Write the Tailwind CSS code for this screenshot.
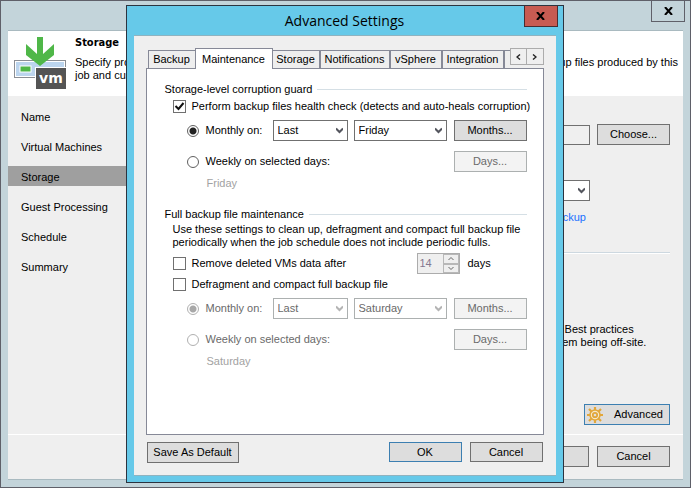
<!DOCTYPE html>
<html lang="en">
<head>
    <meta charset="UTF-8">
    <meta name="viewport" content="width=device-width, initial-scale=1.0">
    <title>Advanced Settings</title>
    <script src="https://cdn.jsdelivr.net/npm/@tailwindcss/browser@4"></script>
</head>
<body class="relative min-h-screen flex flex-col bg-[#c3d4da] border border-[#5f6069] font-['Liberation_Sans',Arial,sans-serif] text-[11px] leading-[13px] text-black">

    <!-- Job wizard window -->
    <header class="flex justify-end h-[29px] pr-[5px] shrink-0">
        <button aria-label="Close wizard" class="w-[34px] h-[21px] border border-t-0 border-[#5f6069] flex items-center justify-center">
            <svg class="w-[9px] h-[8px]" viewBox="0 0 9 8" fill="none" stroke="#000" stroke-width="2"><path d="M1 0l7 8M8 0L1 8"/></svg>
        </button>
    </header>

    <div class="flex-1 flex flex-col mx-[7px] mb-[7px] bg-[#efefef] border-y border-[#a9bac0]">
        <div class="flex h-[65px] bg-white shrink-0">
            <svg class="w-[52px] h-[52px] ml-[6px] mt-[6px] shrink-0" viewBox="0 0 52 52">
                <rect x="0.5" y="23.5" width="51" height="17" fill="#fff" stroke="#8b8e94"/>
                <rect x="2" y="25" width="48" height="14" fill="#bcd5ee"/>
                <rect x="6" y="29" width="11" height="6" fill="#4fb748" stroke="#fff"/>
                <path d="M23 0h6v17l11-10v11L26 29 12 18V7l11 10z" fill="#4fb748"/>
                <rect x="21" y="30" width="31" height="22" fill="#fff"/>
                <rect x="22" y="31" width="30" height="21" fill="#545454"/>
                <text x="25" y="46" font-family="DejaVu Sans" font-weight="bold" font-size="14" fill="#fff">vm</text>
            </svg>
            <div class="flex-1 pl-[9px] pr-[5px] pt-[5px]">
                <h1 class="font-['DejaVu_Sans_Condensed','DejaVu_Sans',sans-serif] font-bold text-[11px]">Storage</h1>
                <div class="flex justify-between pt-[7px] whitespace-nowrap">
                    <p>Specify prox<br>job and custo</p>
                    <p>backup files produced by this</p>
                </div>
            </div>
        </div>

        <div class="flex-1 flex">
            <nav class="w-[140px] pt-[10px] flex flex-col gap-[10px]">
                <a href="#" class="h-[20px] pt-[2px] px-[13px] flex items-center">Name</a>
                <a href="#" class="h-[20px] pt-[2px] px-[13px] flex items-center">Virtual Machines</a>
                <a href="#" class="h-[20px] pt-[2px] px-[13px] flex items-center bg-[#9f9f9f]">Storage</a>
                <a href="#" class="h-[20px] pt-[2px] px-[13px] flex items-center">Guest Processing</a>
                <a href="#" class="h-[20px] pt-[2px] px-[13px] flex items-center">Schedule</a>
                <a href="#" class="h-[20px] pt-[2px] px-[13px] flex items-center">Summary</a>
            </nav>
            <main class="flex-1 flex flex-col items-end pr-[13px] pt-[28px]">
                <div class="flex items-center gap-[7px]">
                    <input type="text" aria-label="Backup proxy" readonly class="w-[100px] h-[20px] border border-[#707070] bg-[#efefef]">
                    <button class="w-[73px] h-[21px] border border-[#707070] bg-[#dddddd]">Choose...</button>
                </div>
                <div class="relative mt-[35px] mr-[80px]">
                    <select aria-label="Backup repository" class="block w-[100px] h-[21px] appearance-none border border-[#707070] bg-white">
                        <option></option>
                    </select>
                    <svg class="absolute right-[5px] top-[7px] w-[7px] h-[7px] pointer-events-none" viewBox="0 0 7 7" fill="none" stroke="#54565e" stroke-width="2"><path d="M0 1.5l3.5 3.5L7 1.5"/></svg>
                </div>
                <a href="#" class="mt-[10px] mr-[84px] text-[#1a6fff]">Map backup</a>
                <hr class="w-full mt-[28px] border-t border-[#cdd8e0] border-b border-b-white">
                <div class="w-[117px] mt-[69px] whitespace-nowrap">
                    <p>it. Best practices</p>
                    <p>them being off-site.</p>
                </div>
                <button class="w-[86px] h-[21px] mt-[55px] pl-[2px] flex items-center gap-[11px] border border-[#3c7fb1] bg-[#dddddd]">
                    <svg class="w-[16px] h-[16px]" viewBox="0 0 16 16" fill="none" stroke="#e2a73a">
                        <path d="M8 0v3M8 13v3M0 8h3M13 8h3M2 2l2.5 2.5M11.5 11.5L14 14M14 2l-2.5 2.5M4.5 11.5L2 14" stroke-width="2.2"/>
                        <circle cx="8" cy="8" r="5" stroke-width="1.6" fill="#f7e9c8"/>
                        <circle cx="8" cy="8" r="2.2" stroke-width="1.8" fill="#dddddd"/>
                    </svg>
                    Advanced
                </button>
            </main>
        </div>

        <footer class="flex justify-end gap-[8px] h-[45px] pt-[11px] pr-[13px] border-t border-white shrink-0">
            <button class="w-[90px] h-[21px] border border-[#707070] bg-[#dddddd]">Finish</button>
            <button class="w-[73px] h-[21px] border border-[#707070] bg-[#dddddd]">Cancel</button>
        </footer>
    </div>

    <!-- Advanced settings dialog -->
    <div class="absolute inset-0 flex justify-center pt-[4px] pb-[4px] pr-[2px]">
        <div role="dialog" aria-labelledby="dialogTitle" class="w-[438px] flex flex-col border border-[#2b3440] bg-[#66c9e9]">
            <div class="relative h-[29px] flex items-center justify-center shrink-0">
                <h2 id="dialogTitle" class="font-['Open_Sans','Noto_Sans',sans-serif] text-[14px] leading-[20px]">Advanced Settings</h2>
                <button aria-label="Close" class="absolute right-[5px] top-0 w-[34px] h-[21px] border border-t-0 border-[#4a2c30] bg-[#c75b52] flex items-center justify-center">
                    <svg class="w-[9px] h-[8px]" viewBox="0 0 9 8" fill="none" stroke="#000" stroke-width="2"><path d="M1 0l7 8M8 0L1 8"/></svg>
                </button>
            </div>

            <div class="flex-1 flex flex-col mx-[7px] mb-[6px] px-[12px] pt-[12px] bg-[#efefef] border-y border-[#8fb3c0]">
                <div role="tablist" class="relative z-10 flex items-end -mb-px pl-[2px] whitespace-nowrap">
                    <button role="tab" class="h-[19px] w-[47px] border border-r-0 border-[#868997] bg-[#eeeeee]">Backup</button>
                    <button role="tab" aria-selected="true" class="h-[21px] w-[78px] border border-b-0 border-[#868997] bg-white">Maintenance</button>
                    <button role="tab" class="h-[19px] w-[47px] border border-l-0 border-[#868997] bg-[#eeeeee]">Storage</button>
                    <button role="tab" class="h-[19px] w-[70px] border border-[#868997] bg-[#eeeeee]">Notifications</button>
                    <button role="tab" class="h-[19px] w-[52px] border border-[#868997] bg-[#eeeeee]">vSphere</button>
                    <button role="tab" class="h-[19px] w-[62px] border border-[#868997] bg-[#eeeeee]">Integration</button>
                    <span class="h-[19px] w-[6px] border-l border-y border-[#868997] bg-[#eeeeee]"></span>
                    <div class="flex-1 flex self-start">
                        <button aria-label="Previous tabs" class="flex-1 h-[17px] border border-[#acacac] bg-[#efefef] flex items-center justify-center">
                            <svg class="w-[5px] h-[6px]" viewBox="0 0 5 6" fill="none" stroke="#222" stroke-width="1.4"><path d="M4 0.5L1 3l3 2.5"/></svg>
                        </button>
                        <button aria-label="Next tabs" class="flex-1 h-[17px] border border-l-0 border-[#acacac] bg-[#efefef] flex items-center justify-center">
                            <svg class="w-[5px] h-[6px]" viewBox="0 0 5 6" fill="none" stroke="#222" stroke-width="1.4"><path d="M1 0.5L4 3 1 5.5"/></svg>
                        </button>
                    </div>
                </div>

                <div role="tabpanel" class="flex-1 pl-[18px] pr-[16px] pt-[14px] border border-[#868997] bg-white whitespace-nowrap">
                    <section>
                        <h3 class="flex items-center gap-[5px]">Storage-level corruption guard<span class="flex-1 border-t border-[#d5dfe5]"></span></h3>
                        <div class="pl-[8px]">
                            <label class="flex items-center gap-[6px] h-[20px]">
                                <span class="relative">
                                    <input type="checkbox" checked class="block size-[13px] appearance-none border border-[#707070] bg-white">
                                    <svg class="absolute inset-0 size-[13px] pointer-events-none" viewBox="0 0 13 13" fill="none" stroke="#111" stroke-width="2"><path d="M2.5 6L5.5 9l5-6"/></svg>
                                </span>
                                Perform backup files health check (detects and auto-heals corruption)
                            </label>
                            <div class="flex items-center pl-[14px] mt-[4px]">
                                <label class="flex items-center gap-[7px] w-[86px]">
                                    <input type="radio" name="health" checked class="size-[12px] appearance-none rounded-full border border-[#606060] bg-[radial-gradient(circle,#222_3px,#fff_4px)]">
                                    Monthly on:
                                </label>
                                <div class="relative w-[75px]">
                                    <select aria-label="Week of month" class="block w-full h-[21px] pl-[4px] appearance-none border border-[#707070] bg-white"><option>Last</option></select>
                                    <svg class="absolute right-[5px] top-[7px] w-[7px] h-[7px] pointer-events-none" viewBox="0 0 7 7" fill="none" stroke="#54565e" stroke-width="2"><path d="M0 1.5l3.5 3.5L7 1.5"/></svg>
                                </div>
                                <div class="relative w-[93px] ml-[6px]">
                                    <select aria-label="Day of week" class="block w-full h-[21px] pl-[4px] appearance-none border border-[#707070] bg-white"><option>Friday</option></select>
                                    <svg class="absolute right-[5px] top-[7px] w-[7px] h-[7px] pointer-events-none" viewBox="0 0 7 7" fill="none" stroke="#54565e" stroke-width="2"><path d="M0 1.5l3.5 3.5L7 1.5"/></svg>
                                </div>
                                <button class="w-[73px] h-[21px] ml-auto border border-[#707070] bg-[#dddddd]">Months...</button>
                            </div>
                            <div class="flex items-center justify-between pl-[14px] mt-[10px]">
                                <label class="flex items-center gap-[7px]">
                                    <input type="radio" name="health" class="size-[12px] appearance-none rounded-full border border-[#606060] bg-white">
                                    Weekly on selected days:
                                </label>
                                <button disabled class="w-[73px] h-[21px] border border-[#acb0b0] bg-[#f3f3f3] text-[#6a6a6a]">Days...</button>
                            </div>
                            <p class="pl-[34px] mt-[5px] text-[#a2a2a2]">Friday</p>
                        </div>
                    </section>

                    <section class="mt-[18px]">
                        <h3 class="flex items-center gap-[5px]">Full backup file maintenance<span class="flex-1 border-t border-[#d5dfe5]"></span></h3>
                        <div class="pl-[8px]">
                            <p class="mt-[2px]">Use these settings to clean up, defragment and compact full backup file<br>periodically when the job schedule does not include periodic fulls.</p>
                            <div class="flex items-center mt-[4px]">
                                <label class="flex items-center gap-[6px] w-[244px]">
                                    <input type="checkbox" class="size-[13px] appearance-none border border-[#707070] bg-white">
                                    Remove deleted VMs data after
                                </label>
                                <div class="flex w-[43px] h-[21px] border border-[#acacac] bg-[#efefef]">
                                    <input type="text" id="retentionDays" value="14" disabled class="w-0 flex-1 pl-[2px] text-[#857890]">
                                    <div class="flex flex-col w-[16px]">
                                        <button disabled aria-label="Increase" class="flex-1 border border-[#b8b8b8] flex items-center justify-center">
                                            <svg class="w-[6px] h-[5px]" viewBox="0 0 6 5" fill="none" stroke="#666"><path d="M0.5 4L3 1.5 5.5 4"/></svg>
                                        </button>
                                        <button disabled aria-label="Decrease" class="flex-1 border border-[#b8b8b8] flex items-center justify-center">
                                            <svg class="w-[6px] h-[5px]" viewBox="0 0 6 5" fill="none" stroke="#666"><path d="M0.5 1L3 3.5 5.5 1"/></svg>
                                        </button>
                                    </div>
                                </div>
                                <label for="retentionDays" class="pl-[8px]">days</label>
                            </div>
                            <label class="flex items-center gap-[6px] h-[20px]">
                                <input type="checkbox" class="size-[13px] appearance-none border border-[#707070] bg-white">
                                Defragment and compact full backup file
                            </label>
                            <div class="flex items-center pl-[14px] mt-[4px] text-[#6a6a6a]">
                                <label class="flex items-center gap-[7px] w-[86px]">
                                    <input type="radio" name="defrag" checked disabled class="size-[12px] appearance-none rounded-full border border-[#b0b0b0] bg-[radial-gradient(circle,#a8a8a8_3px,#fff_4px)]">
                                    Monthly on:
                                </label>
                                <div class="relative w-[75px]">
                                    <select aria-label="Defragment week of month" disabled class="block w-full h-[21px] pl-[4px] appearance-none border border-[#acb0b0] bg-white opacity-100"><option>Last</option></select>
                                    <svg class="absolute right-[5px] top-[7px] w-[7px] h-[7px] pointer-events-none" viewBox="0 0 7 7" fill="none" stroke="#b4b4b4" stroke-width="2"><path d="M0 1.5l3.5 3.5L7 1.5"/></svg>
                                </div>
                                <div class="relative w-[93px] ml-[6px]">
                                    <select aria-label="Defragment day of week" disabled class="block w-full h-[21px] pl-[4px] appearance-none border border-[#acb0b0] bg-white opacity-100"><option>Saturday</option></select>
                                    <svg class="absolute right-[5px] top-[7px] w-[7px] h-[7px] pointer-events-none" viewBox="0 0 7 7" fill="none" stroke="#b4b4b4" stroke-width="2"><path d="M0 1.5l3.5 3.5L7 1.5"/></svg>
                                </div>
                                <button disabled class="w-[73px] h-[21px] ml-auto border border-[#acb0b0] bg-[#f3f3f3]">Months...</button>
                            </div>
                            <div class="flex items-center justify-between pl-[14px] mt-[10px] text-[#6a6a6a]">
                                <label class="flex items-center gap-[7px]">
                                    <input type="radio" name="defrag" disabled class="size-[12px] appearance-none rounded-full border border-[#b0b0b0] bg-white">
                                    Weekly on selected days:
                                </label>
                                <button disabled class="w-[73px] h-[21px] border border-[#acb0b0] bg-[#f3f3f3]">Days...</button>
                            </div>
                            <p class="pl-[34px] mt-[5px] text-[#a2a2a2]">Saturday</p>
                        </div>
                    </section>
                </div>

                <div class="flex gap-[8px] pt-[7px] pb-[12px] pl-px pr-px">
                    <button class="w-[92px] h-[21px] mr-auto border border-[#707070] bg-[#dddddd]">Save As Default</button>
                    <button class="w-[73px] h-[20px] border border-[#3c7fb1] bg-[#dddddd]">OK</button>
                    <button class="w-[73px] h-[20px] border border-[#707070] bg-[#dddddd]">Cancel</button>
                </div>
            </div>
        </div>
    </div>
</body>
</html>
